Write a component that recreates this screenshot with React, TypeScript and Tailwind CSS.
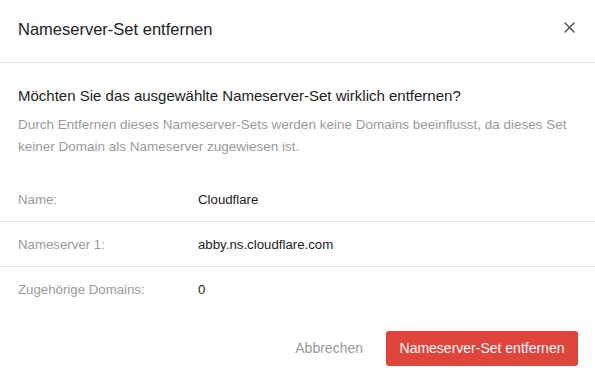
const rows = [
  { label: "Name:", value: "Cloudflare" },
  { label: "Nameserver 1:", value: "abby.ns.cloudflare.com" },
  { label: "Zugehörige Domains:", value: "0" },
];

function App() {
  return (
    <div
      className="w-[595px] h-[383px] bg-white text-[#222] flex flex-col"
      style={{ fontFamily: '"Liberation Sans", Arial, sans-serif' }}
    >
      <div className="flex items-start justify-between px-[18px] pt-[19px] h-[63px] border-b border-[#e2e2e2]">
        <h2 className="text-[16.5px] leading-[20px] text-[#222]">Nameserver-Set entfernen</h2>
        <button className="mt-[3px] mr-[2px] text-[#555]" aria-label="Schließen">
          <svg width="11" height="11" viewBox="0 0 11 11" fill="none">
            <path d="M1 1l9 9M10 1l-9 9" stroke="currentColor" strokeWidth="1.5" strokeLinecap="round" />
          </svg>
        </button>
      </div>

      <div className="px-[18px] pt-[23px]">
        <p className="text-[15px] leading-[20px] text-[#222]">
          Möchten Sie das ausgewählte Nameserver-Set wirklich entfernen?
        </p>
        <p className="mt-[8px] text-[13.5px] leading-[22px] text-[#9a9a9a]">
          Durch Entfernen dieses Nameserver-Sets werden keine Domains beeinflusst, da dieses Set keiner Domain als Nameserver zugewiesen ist.
        </p>
      </div>

      <div className="mt-[19px]">
        {rows.map((row, i) => (
          <div
            key={row.label}
            className={
              "flex items-center px-[18px] pt-[1px] h-[45px] text-[13.25px] " +
              (i < rows.length - 1 ? "border-b border-[#e2e2e2]" : "")
            }
          >
            <div className="w-[180px] text-[#9a9a9a]">{row.label}</div>
            <div className="text-[#222]">{row.value}</div>
          </div>
        ))}
      </div>

      <div className="flex justify-end items-center gap-[23px] px-[17px] mt-auto pb-[17px]">
        <button className="text-[14px] text-[#9a9a9a]">Abbrechen</button>
        <button className="h-[35px] w-[192px] rounded-[3px] bg-[#e0453b] text-white text-[14px] font-medium">
          Nameserver-Set entfernen
        </button>
      </div>
    </div>
  );
}

export default App;
